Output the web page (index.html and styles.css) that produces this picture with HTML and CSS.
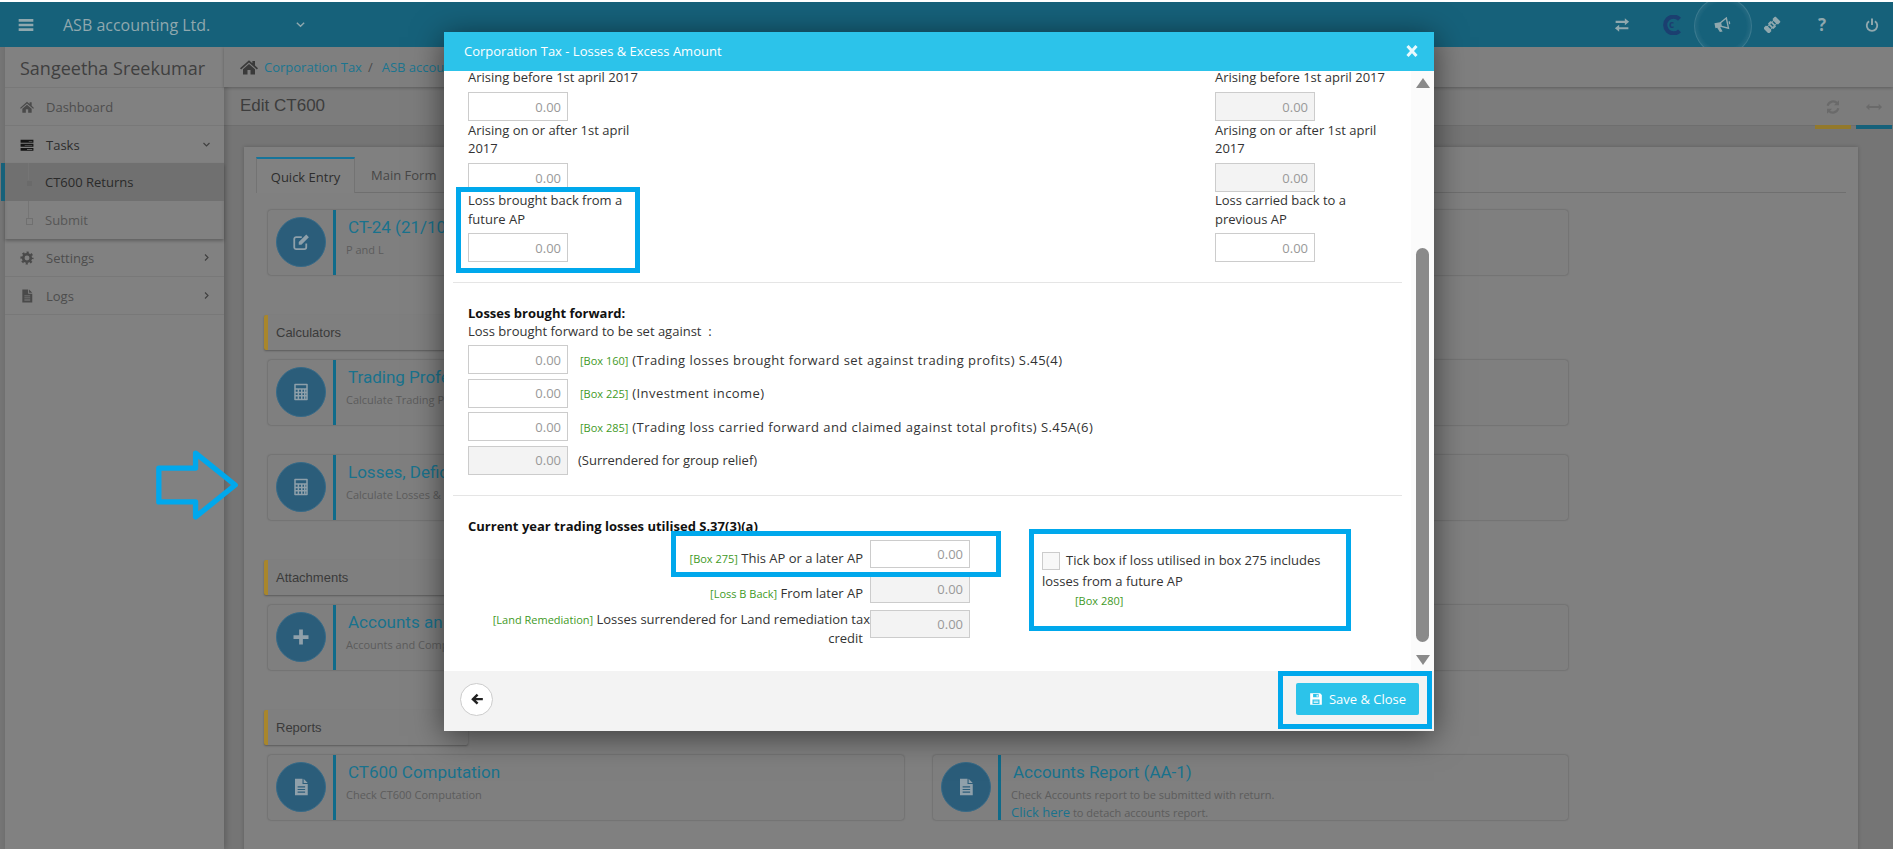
FILE: index.html
```html
<!DOCTYPE html>
<html lang="en">
<head>
    <meta charset="UTF-8">
    <meta name="viewport" content="width=device-width, initial-scale=1.0">
    <title>Edit CT600</title>
    <link rel="stylesheet" href="styles.css">
</head>
<body>
    <svg class="sprite" xmlns="http://www.w3.org/2000/svg">
        <symbol id="i-bars" viewBox="0 0 24 24"><path d="M1 3h22v4H1zM1 10h22v4H1zM1 17h22v4H1z"/></symbol>
        <symbol id="i-down" viewBox="0 0 24 24"><path d="M4 8l8 8 8-8" fill="none" stroke="currentColor" stroke-width="3"/></symbol>
        <symbol id="i-right" viewBox="0 0 24 24"><path d="M8 4l8 8-8 8" fill="none" stroke="currentColor" stroke-width="3"/></symbol>
        <symbol id="i-home" viewBox="0 0 24 24"><path d="M12 3L0 13.5l1.5 1.7L12 6l10.500 9.200 1.500-1.700-4-3.500V4h-3.500v3zM12 8L4 15v7h6v-6h4v6h6v-7z"/></symbol>
        <symbol id="i-tasks" viewBox="0 0 24 24"><path fill-rule="evenodd" d="M1 3h22v5H1zM15 5v1h6V5zM1 10h22v5H1zM8 12v1h13v-1zM1 17h22v5H1zM12 19v1h9v-1z"/></symbol>
        <symbol id="i-gear" viewBox="0 0 24 24"><circle cx="12" cy="12" r="6.500" fill="none" stroke="currentColor" stroke-width="4.500"/><circle cx="12" cy="12" r="9.500" fill="none" stroke="currentColor" stroke-width="3.500" stroke-dasharray="3.700 3.760" stroke-dashoffset="1.850"/></symbol>
        <symbol id="i-file" viewBox="0 0 24 24"><path fill-rule="evenodd" d="M4 1h10v7h7v15H4zM15.500 1l5.500 5.500h-5.500zM7.500 11v1.500h10V11zM7.500 14.500V16h10v-1.500zM7.500 18v1.500h10V18z"/></symbol>
        <symbol id="i-exchange" viewBox="0 0 24 24"><path d="M3 6h13V2.500l6 5-6 5V9H3zM21 15H8v-3.500l-6 5 6 5V18h13z"/></symbol>
        <symbol id="i-horn" viewBox="0 0 24 24"><g transform="rotate(-12 12 12)"><path fill-rule="evenodd" d="M21 2L10 7.500H2v7h2.500L7 21h4l-2-6.500h1L21 20zM19 5.200L11.500 9v4l7.500 3.800z"/><path d="M22 9h2v4h-2z"/></g></symbol>
        <symbol id="i-ticket" viewBox="0 0 24 24"><g transform="rotate(45 12 12)"><path fill-rule="evenodd" d="M6.500 0h11v5.500a2 2 0 0 0 0 4v5a2 2 0 0 0 0 4V24h-11v-5.500a2 2 0 0 0 0-4v-5a2 2 0 0 0 0-4zM9.500 6.500v2h5v-2zM9.500 11v2h5v-2zM9.500 15.500v2h5v-2z"/></g></symbol>
        <symbol id="i-power" viewBox="0 0 24 24"><path d="M7 5.500a9 9 0 1 0 10 0" fill="none" stroke="currentColor" stroke-width="3.200"/><path d="M10.300 1h3.400v11h-3.400z"/></symbol>
        <symbol id="i-edit" viewBox="0 0 24 24"><path d="M19 14v5a2.500 2.500 0 0 1-2.500 2.500h-11A2.500 2.500 0 0 1 3 19V8a2.500 2.500 0 0 1 2.500-2.500H13" fill="none" stroke="currentColor" stroke-width="2.400"/><path d="M9 12L19 2l3.500 3.500-10 10H9z"/></symbol>
        <symbol id="i-calc" viewBox="0 0 24 24"><path fill-rule="evenodd" d="M4 1h16a1 1 0 0 1 1 1v20a1 1 0 0 1-1 1H4a1 1 0 0 1-1-1V2a1 1 0 0 1 1-1zM5 3v4h14V3zM5 9v2.500h2.500V9zM9.500 9v2.500H12V9zM14 9v2.500h2V9zM18 9v2.500h1V9zM5 13.500V16h2.500v-2.500zM9.500 13.500V16H12v-2.500zM14 13.500V16h2v-2.500zM18 13.500V16h1v-2.500zM5 18v3h2.500v-3zM9.500 18v3H12v-3zM14 18v3h2v-3zM18 18v3h1v-3z"/></symbol>
        <symbol id="i-plus" viewBox="0 0 24 24"><path d="M9.500 2h5v7.500H22v5h-7.500V22h-5v-7.500H2v-5h7.500z"/></symbol>
        <symbol id="i-refresh" viewBox="0 0 24 24"><path d="M4 10a8.500 8.500 0 0 1 14.500-3.500M20 14a8.500 8.500 0 0 1-14.500 3.500" fill="none" stroke="currentColor" stroke-width="3.200"/><path d="M21 2v7.500h-7.500zM3 22v-7.500h7.500z"/></symbol>
        <symbol id="i-arrows" viewBox="0 0 24 24"><path d="M0 12l5-5v3.500h14V7l5 5-5 5v-3.500H5V17z"/></symbol>
        <symbol id="i-save" viewBox="0 0 24 24"><path fill-rule="evenodd" d="M2 2h17l3 3v17H2zM7 3.500V9h9.500V3.500zM13 4.500h2v3.500h-2zM6 13v7.500h12V13zM8 15h8v1.200H8zM8 17.500h8v1.200H8z"/></symbol>
        <symbol id="i-back" viewBox="0 0 24 24"><path d="M11.500 3l3 3-4.500 4.200h12v4.100H10l4.500 4.200-3 3L2 12.250z"/></symbol>
    </svg>

    <header class="topbar">
        <svg class="topbar-menu"><use href="#i-bars"/></svg>
        <span class="company">ASB accounting Ltd.</span>
        <svg class="company-caret"><use href="#i-down"/></svg>
        <nav class="topnav">
            <svg class="topnav-icon"><use href="#i-exchange"/></svg>
            <svg class="topnav-logo" viewBox="0 0 24 24">
                <path d="M21 5a10 10 0 1 0 0 14" fill="none" stroke="#1b3f70" stroke-width="5"/>
                <text x="8.500" y="16" class="logo-c">c</text>
            </svg>
            <span class="pulse"><svg class="topnav-icon"><use href="#i-horn"/></svg></span>
            <svg class="topnav-icon"><use href="#i-ticket"/></svg>
            <span class="topnav-help">?</span>
            <svg class="topnav-icon topnav-icon-small"><use href="#i-power"/></svg>
        </nav>
    </header>

    <div class="shell">
        <aside class="sidebar">
            <div class="user-name">Sangeetha Sreekumar</div>
            <a class="side-item"><svg class="side-icon"><use href="#i-home"/></svg>Dashboard</a>
            <a class="side-item side-item-open"><svg class="side-icon side-icon-dark"><use href="#i-tasks"/></svg>Tasks<svg class="side-caret"><use href="#i-down"/></svg></a>
            <div class="side-sub">
                <a class="sub-item sub-item-active">CT600 Returns</a>
                <a class="sub-item">Submit</a>
            </div>
            <a class="side-item"><svg class="side-icon"><use href="#i-gear"/></svg>Settings<svg class="side-caret"><use href="#i-right"/></svg></a>
            <a class="side-item"><svg class="side-icon"><use href="#i-file"/></svg>Logs<svg class="side-caret"><use href="#i-right"/></svg></a>
        </aside>

        <main class="main">
            <div class="crumbs">
                <svg class="crumbs-home"><use href="#i-home"/></svg>
                <a>Corporation Tax</a><span class="crumbs-sep">/</span><a>ASB accounting Ltd.</a>
            </div>
            <div class="page-title">
                <h1>Edit CT600</h1>
                <div class="page-tools">
                    <div class="page-tool page-tool-gold"><svg class="tool-icon"><use href="#i-refresh"/></svg></div>
                    <div class="page-tool page-tool-teal"><svg class="tool-icon tool-icon-wide"><use href="#i-arrows"/></svg></div>
                </div>
            </div>

            <div class="panel">
                <div class="tabs">
                    <a class="tab tab-active">Quick Entry</a>
                    <a class="tab">Main Form</a>
                </div>

                <div class="panel-body">
                    <div class="card-row">
                        <div class="card">
                            <span class="card-badge"><svg><use href="#i-edit"/></svg></span>
                            <div class="card-text"><h3>CT-24 (21/10</h3><p>P and L</p></div>
                        </div>
                        <div class="card"></div>
                    </div>

                    <h4 class="group-head">Calculators</h4>
                    <div class="card-row">
                        <div class="card">
                            <span class="card-badge"><svg><use href="#i-calc"/></svg></span>
                            <div class="card-text"><h3>Trading Profe</h3><p>Calculate Trading P</p></div>
                        </div>
                        <div class="card"></div>
                    </div>
                    <div class="card-row card-row-next">
                        <div class="card">
                            <span class="card-badge"><svg><use href="#i-calc"/></svg></span>
                            <div class="card-text"><h3>Losses, Defic</h3><p>Calculate Losses &amp;</p></div>
                        </div>
                        <div class="card"></div>
                    </div>

                    <h4 class="group-head">Attachments</h4>
                    <div class="card-row">
                        <div class="card">
                            <span class="card-badge"><svg><use href="#i-plus"/></svg></span>
                            <div class="card-text"><h3>Accounts an</h3><p>Accounts and Comp</p></div>
                        </div>
                        <div class="card"></div>
                    </div>

                    <h4 class="group-head">Reports</h4>
                    <div class="card-row">
                        <div class="card">
                            <span class="card-badge"><svg><use href="#i-file"/></svg></span>
                            <div class="card-text"><h3>CT600 Computation</h3><p>Check CT600 Computation</p></div>
                        </div>
                        <div class="card">
                            <span class="card-badge"><svg><use href="#i-file"/></svg></span>
                            <div class="card-text">
                                <h3>Accounts Report (AA-1)</h3>
                                <p>Check Accounts report to be submitted with return.</p>
                                <p class="card-link-line"><a>Click here</a> to detach accounts report.</p>
                            </div>
                        </div>
                    </div>
                </div>
            </div>
        </main>
    </div>

    <!-- blue arrow drawn over the page, points at the Losses card -->
    <svg class="note-arrow" viewBox="0 0 90 76">
        <path d="M5 20.500h38V5l41 33-41 33V55.500H5z"/>
    </svg>

    <div class="modal">
        <div class="modal-head">
            <span>Corporation Tax - Losses &amp; Excess Amount</span>
            <svg class="modal-close" viewBox="0 0 14 14"><path d="M2.500 2l9 10M11.500 2l-9 10"/></svg>
        </div>

        <div class="modal-body">
            <div class="modal-scroll">
                <div class="split">
                    <div class="split-col">
                        <label class="field-label field-label-first">Arising before 1st april 2017</label>
                        <input class="amount" value="0.00">
                        <label class="field-label">Arising on or after 1st april 2017</label>
                        <input class="amount" value="0.00">
                        <label class="field-label field-label-tall">Loss brought back from a future AP</label>
                        <input class="amount" value="0.00">
                    </div>
                    <div class="split-col">
                        <label class="field-label field-label-first">Arising before 1st april 2017</label>
                        <input class="amount" value="0.00" disabled>
                        <label class="field-label">Arising on or after 1st april 2017</label>
                        <input class="amount" value="0.00" disabled>
                        <label class="field-label field-label-tall">Loss carried back to a previous AP</label>
                        <input class="amount" value="0.00">
                    </div>
                </div>

                <hr class="rule">

                <section class="block">
                    <div class="block-title">Losses brought forward:</div>
                    <div class="block-sub">Loss brought forward to be set against &nbsp;:</div>
                    <div class="loss-rows">
                        <div class="loss-row"><input class="amount" value="0.00"><span class="loss-text"><span class="box-tag">[Box 160]</span> (Trading losses brought forward set against trading profits) S.45(4)</span></div>
                        <div class="loss-row"><input class="amount" value="0.00"><span class="loss-text"><span class="box-tag">[Box 225]</span> (Investment income)</span></div>
                        <div class="loss-row"><input class="amount" value="0.00"><span class="loss-text"><span class="box-tag">[Box 285]</span> (Trading loss carried forward and claimed against total profits) S.45A(6)</span></div>
                        <div class="loss-row loss-row-plain"><input class="amount" value="0.00" disabled><span>(Surrendered for group relief)</span></div>
                    </div>
                </section>

                <hr class="rule">

                <section class="block">
                    <div class="block-title">Current year trading losses utilised S.37(3)(a)</div>
                    <div class="current">
                        <div class="current-rows">
                            <div class="current-row">
                                <span class="current-label"><span class="box-tag">[Box 275]</span> This AP or a later AP</span>
                                <input class="amount" value="0.00">
                            </div>
                            <div class="current-row">
                                <span class="current-label"><span class="box-tag">[Loss B Back]</span> From later AP</span>
                                <input class="amount" value="0.00" disabled>
                            </div>
                            <div class="current-row">
                                <span class="current-label current-label-wrap">
                                    <span class="current-line"><span class="box-tag">[Land Remediation]</span> Losses surrendered for Land remediation tax</span>
                                    credit
                                </span>
                                <input class="amount" value="0.00" disabled>
                            </div>
                        </div>
                        <div class="tick">
                            <span class="tick-box"></span>Tick box if loss utilised in box 275 includes losses from a future AP
                            <div class="box-tag tick-tag">[Box 280]</div>
                        </div>
                    </div>
                </section>
            </div>

            <div class="scrollbar">
                <span class="scroll-up"></span>
                <span class="scroll-track"><span class="scroll-thumb"></span></span>
                <span class="scroll-down"></span>
            </div>
        </div>

        <div class="modal-foot">
            <button class="back-btn"><svg><use href="#i-back"/></svg></button>
            <button class="save-btn"><svg><use href="#i-save"/></svg>Save &amp; Close</button>
        </div>

        <span class="mark mark-loss"></span>
        <span class="mark mark-box275"></span>
        <span class="mark mark-tick"></span>
        <span class="mark mark-save"></span>
    </div>
</body>
</html>
```

FILE: styles.css
```css
* {
    box-sizing: border-box;
}

html, body {
    height: 100%;
    overflow: hidden;
}

body {
    margin: 0;
    padding-top: 2px;
    background-color: #fff;
    color: #333;
    font-family: "Open Sans", "Liberation Sans", sans-serif;
    font-size: 13px;
    position: relative;
}

svg {
    fill: currentColor;
}

a {
    color: inherit;
}

.sprite {
    display: none;
}

/* top bar */

.topbar {
    height: 45px;
    background-color: #16617a;
    color: #90a8ae;
    display: flex;
    align-items: center;
    padding-left: 18px;
    overflow: hidden;
}

.topbar-menu {
    width: 16px;
    height: 16px;
    margin-right: 29px;
}

.company {
    font-size: 16px;
    width: 232px;
}

.company-caret {
    width: 11px;
    height: 11px;
}

.topnav {
    margin-left: auto;
    display: flex;
    align-items: center;
    gap: 30px;
    padding-right: 11px;
}

.topnav-icon {
    width: 20px;
    height: 20px;
    padding: 1.500px;
    display: block;
}

.topnav-icon-small {
    padding: 3px;
}

.topnav-logo {
    width: 20px;
    height: 20px;
    display: block;
}

.logo-c {
    font-size: 12px;
    font-family: "Open Sans", sans-serif;
    fill: #1b3f70;
    font-weight: 700;
}

.topnav-help {
    width: 20px;
    text-align: center;
    font-size: 17px;
    font-weight: 700;
}

.pulse {
    position: relative;
    display: block;
}

.pulse::before {
    content: "";
    position: absolute;
    left: -18px;
    top: -18px;
    width: 56px;
    height: 56px;
    border-radius: 50%;
    border: 1px solid rgba(255, 255, 255, 0.1);
    background: radial-gradient(circle, rgba(255, 255, 255, 0) 58%, rgba(255, 255, 255, 0.2) 100%);
}

/* page under the dialog, colours are as they look through the backdrop */

.shell {
    height: calc(100% - 45px);
    display: flex;
    padding-left: 5px;
    background-color: #757575;
    overflow: hidden;
}

.sidebar {
    width: 219px;
    flex-shrink: 0;
    background-color: #818181;
    color: #4d4d4d;
    box-shadow: 2px 0 6px rgba(0, 0, 0, 0.2);
    position: relative;
}

.user-name {
    height: 41px;
    padding: 9px 15px 0;
    font-size: 18px;
    color: #3f3f3f;
    border-bottom: 1px solid #787878;
}

.side-item {
    height: 38px;
    display: flex;
    align-items: center;
    padding-left: 15px;
    border-bottom: 1px solid #787878;
}

.side-item-open {
    color: #2d2d2d;
    border-bottom: none;
    height: 37px;
}

.side-icon {
    width: 14px;
    height: 14px;
    margin-right: 12px;
    color: #4a4a4a;
}

.side-icon-dark {
    color: #151515;
}

.side-caret {
    width: 9px;
    height: 9px;
    margin-left: auto;
    margin-right: 13px;
    color: #3f3f3f;
}

.side-sub {
    box-shadow: inset 0 3px 4px -2px rgba(0, 0, 0, 0.3), 0 2px 3px rgba(0, 0, 0, 0.25);
}

.sub-item {
    height: 38px;
    padding-left: 40px;
    display: flex;
    align-items: center;
    position: relative;
    color: #565656;
}

.sub-item::before {
    content: "";
    position: absolute;
    left: 23px;
    top: 0;
    bottom: 18px;
    width: 1px;
    background-color: #757575;
}

.sub-item::after {
    content: "";
    position: absolute;
    left: 21px;
    top: 17px;
    width: 5px;
    height: 5px;
    border: 1px solid #707070;
    background-color: #818181;
}

.sub-item-active {
    background-color: #707070;
    color: #2a2a2a;
    box-shadow: -4px 0 0 #16617a;
}

.sub-item-active::after {
    background-color: #6a6a6a;
}

.main {
    flex: 1;
    min-width: 0;
}

.crumbs {
    height: 40px;
    padding-left: 16px;
    display: flex;
    align-items: center;
    background-color: #7f7f7f;
    color: #1b7590;
    box-shadow: 0 1px 3px rgba(0, 0, 0, 0.25);
    position: relative;
}

.crumbs-home {
    width: 18px;
    height: 18px;
    margin-right: 6px;
    color: #3a3a3a;
}

.crumbs-sep {
    margin: 0 9px 0 6px;
    color: #4a4a4a;
}

.page-title {
    height: 39px;
    padding-left: 16px;
    display: flex;
    align-items: center;
    justify-content: space-between;
    background-color: #7c7c7c;
    border-bottom: 1px solid #6e6e6e;
}

.page-title h1 {
    margin: 0;
    font-family: "Liberation Sans", sans-serif;
    font-size: 17px;
    font-weight: 400;
    color: #3d3d3d;
}

.page-tools {
    display: flex;
    align-self: stretch;
    gap: 5px;
    margin-right: 1px;
}

.page-tool {
    width: 36px;
    display: flex;
    align-items: center;
    justify-content: center;
    margin-bottom: -4px;
    border-bottom: 4px solid;
    padding-top: 2px;
}

.page-tool-gold {
    border-color: #93792b;
}

.page-tool-teal {
    border-color: #16617a;
}

.tool-icon {
    width: 16px;
    height: 16px;
    color: #6a6a6a;
}

.tool-icon-wide {
    width: 18px;
}

.panel {
    margin: 21px 35px 0 20px;
    height: 760px;
    padding: 10px 12px 0;
    background-color: #808080;
    box-shadow: 0 0 4px rgba(0, 0, 0, 0.2);
}

.tabs {
    display: flex;
    height: 36px;
    border-bottom: 1px solid #6f6f6f;
}

.tab {
    padding: 9px 16px 0;
    color: #474747;
    white-space: nowrap;
}

.tab-active {
    width: 99px;
    padding: 9px 0 0;
    text-align: center;
    border-top: 2px solid #16749a;
    border-right: 1px solid #737373;
    border-left: 1px solid #737373;
    background-color: #818181;
    color: #2d2d2d;
    height: 36px;
}

.panel-body {
    padding: 17px 0 0 8px;
}

.card-row {
    display: grid;
    grid-template-columns: 636px 635px;
    gap: 29px;
    margin-left: 4px;
    width: 1300px;
}

.card-row-next {
    margin-top: 30px;
}

.card {
    height: 65px;
    display: flex;
    border-radius: 3px;
    background-color: #7f7f7f;
    box-shadow: 0 0 2px rgba(0, 0, 0, 0.35);
}

.card-badge {
    width: 50px;
    height: 50px;
    border-radius: 50%;
    margin: 7px 7px 0 8px;
    background-color: #2b5d7a;
    border: 1px solid #366a88;
    color: #8fa0aa;
    display: flex;
    align-items: center;
    justify-content: center;
    flex-shrink: 0;
}

.card-badge svg {
    width: 18px;
    height: 18px;
}

.card-text {
    border-left: 3px solid #0f6b8a;
    padding: 5px 0 0 10px;
    flex: 1;
}

.card-text h3 {
    margin: 0 0 0 2px;
    font-family: Roboto, sans-serif;
    font-size: 17px;
    font-weight: 400;
    line-height: 25px;
    color: #19728d;
}

.card-text p {
    margin: 2px 0 0;
    font-size: 11px;
    line-height: 15px;
    color: #5c5c5c;
}

.card-text .card-link-line {
    margin-top: 3px;
}

.card-link-line a {
    font-size: 13px;
    color: #19728d;
}

.group-head {
    margin: 40px 0 10px;
    width: 204px;
    height: 35px;
    padding-left: 8px;
    border-left: 4px solid #a8862c;
    border-radius: 2px;
    background-color: #7f7f7f;
    box-shadow: 0 1px 2px rgba(0, 0, 0, 0.3);
    font-family: "Liberation Sans", sans-serif;
    font-size: 13px;
    font-weight: 400;
    line-height: 35px;
    color: #3a3a3a;
}

.note-arrow {
    position: absolute;
    left: 154px;
    top: 448px;
    width: 87px;
    height: 74px;
    fill: none;
    stroke: #00a8ec;
    stroke-width: 5.500;
}

.note-arrow path {
    stroke-linejoin: round;
}

/* dialog */

.modal {
    position: absolute;
    left: 444px;
    top: 32px;
    width: 990px;
    height: 699px;
    display: flex;
    flex-direction: column;
    background-color: #fff;
    box-shadow: 0 5px 30px rgba(0, 0, 0, 0.55);
}

.modal-head {
    height: 39px;
    flex-shrink: 0;
    padding: 0 20px 2px;
    display: flex;
    align-items: center;
    justify-content: space-between;
    background-color: #2cc3ea;
    color: #fff;
}

.modal-close {
    width: 14px;
    height: 14px;
    margin-right: -5px;
    fill: none;
    stroke: #e9f9fd;
    stroke-width: 3;
}

.modal-body {
    height: 600px;
    flex-shrink: 0;
    display: flex;
    overflow: hidden;
}

.modal-scroll {
    flex: 1;
    padding: 0 9px;
    min-width: 0;
}

.split {
    display: flex;
    justify-content: space-between;
    padding: 0 12px 0 15px;
}

.split-col {
    width: 175px;
}

.field-label {
    display: block;
    line-height: 18px;
    margin-bottom: 6px;
}

/* the list is scrolled, so this label sits right under the dialog head */
.field-label-first {
    line-height: 12px;
    margin-bottom: 9px;
}

.field-label-tall {
    line-height: 19px;
    margin-top: -1px;
    margin-bottom: 4px;
}

.amount {
    display: block;
    width: 100px;
    height: 29px;
    padding: 0 6px;
    border: 1px solid #ccc;
    background-color: #fff;
    color: #999;
    font-family: inherit;
    font-size: 13px;
    text-align: right;
}

.amount:disabled {
    background-color: #f3f3f3;
    color: #999;
}

.rule {
    margin: 20px 0 21px;
    border: 0;
    border-top: 1px solid #e5e5e5;
}

.block {
    padding: 0 15px;
}

.block-title {
    font-weight: 700;
    line-height: 18px;
    color: #111;
}

.block-sub {
    line-height: 18px;
    margin-bottom: 5px;
}

.loss-rows {
    display: flex;
    flex-direction: column;
    gap: 4.500px;
}

.loss-row {
    display: flex;
    align-items: center;
    gap: 12px;
}

.loss-row-plain {
    gap: 10px;
}

.loss-text {
    letter-spacing: 0.45px;
}

.box-tag {
    font-size: 11px;
    letter-spacing: 0;
    color: #3f9a1f;
}

.current {
    display: flex;
    margin-top: 5px;
}

.current-rows {
    width: 502px;
    flex-shrink: 0;
    display: flex;
    flex-direction: column;
    gap: 7px;
}

.current-row {
    display: flex;
    justify-content: flex-end;
    gap: 7px;
}

.current-label {
    padding-top: 9px;
    line-height: 18px;
    text-align: right;
    color: #333;
}

.current-label-wrap {
    padding-top: 0;
}

.current-line {
    display: block;
    margin-right: -7px;
}

.current-row .amount {
    height: 28px;
    flex-shrink: 0;
}

.tick {
    width: 290px;
    margin: 10px 0 0 72px;
    line-height: 21px;
}

.tick-box {
    display: inline-block;
    width: 18px;
    height: 18px;
    margin-right: 6px;
    vertical-align: middle;
    border: 1px solid #ccc;
    background-color: #f8f8f8;
}

.tick-tag {
    margin-left: 33px;
    line-height: 18px;
}

.scrollbar {
    width: 23px;
    flex-shrink: 0;
    display: flex;
    flex-direction: column;
    align-items: center;
    padding: 7px 0 6px;
    background-color: #fbfbfb;
}

.scroll-up, .scroll-down {
    width: 0;
    height: 0;
    border-left: 7px solid transparent;
    border-right: 7px solid transparent;
}

.scroll-up {
    border-bottom: 10px solid #8a8a8a;
}

.scroll-down {
    border-top: 10px solid #8a8a8a;
}

.scroll-track {
    flex: 1;
    width: 13px;
    padding: 160px 0 13px;
    display: flex;
}

.scroll-thumb {
    flex: 1;
    border-radius: 7px;
    background-color: #8a8a8a;
}

.modal-foot {
    flex: 1;
    padding: 0 15px 4px 16px;
    display: flex;
    align-items: center;
    justify-content: space-between;
    background-color: #f3f3f3;
}

.back-btn {
    width: 33px;
    height: 33px;
    padding: 0;
    border: 1px solid #ccc;
    border-radius: 50%;
    background-color: #fff;
    color: #222;
    display: flex;
    align-items: center;
    justify-content: center;
}

.back-btn svg {
    width: 14px;
    height: 14px;
}

.save-btn {
    width: 123px;
    height: 32px;
    padding: 0;
    border: 0;
    border-radius: 2px;
    background-color: #2cc3ea;
    color: #fff;
    font-family: inherit;
    font-size: 13px;
    display: flex;
    align-items: center;
    justify-content: center;
    gap: 6px;
}

.save-btn svg {
    width: 14px;
    height: 14px;
}

/* blue boxes somebody drew over the screenshot */

.mark {
    position: absolute;
    border: 5px solid #00a8ec;
    pointer-events: none;
}

.mark-loss {
    left: 12px;
    top: 155px;
    width: 184px;
    height: 86px;
}

.mark-box275 {
    left: 227px;
    top: 499px;
    width: 330px;
    height: 46px;
}

.mark-tick {
    left: 585px;
    top: 497px;
    width: 322px;
    height: 102px;
}

.mark-save {
    left: 834px;
    top: 639px;
    width: 154px;
    height: 58px;
}
```
